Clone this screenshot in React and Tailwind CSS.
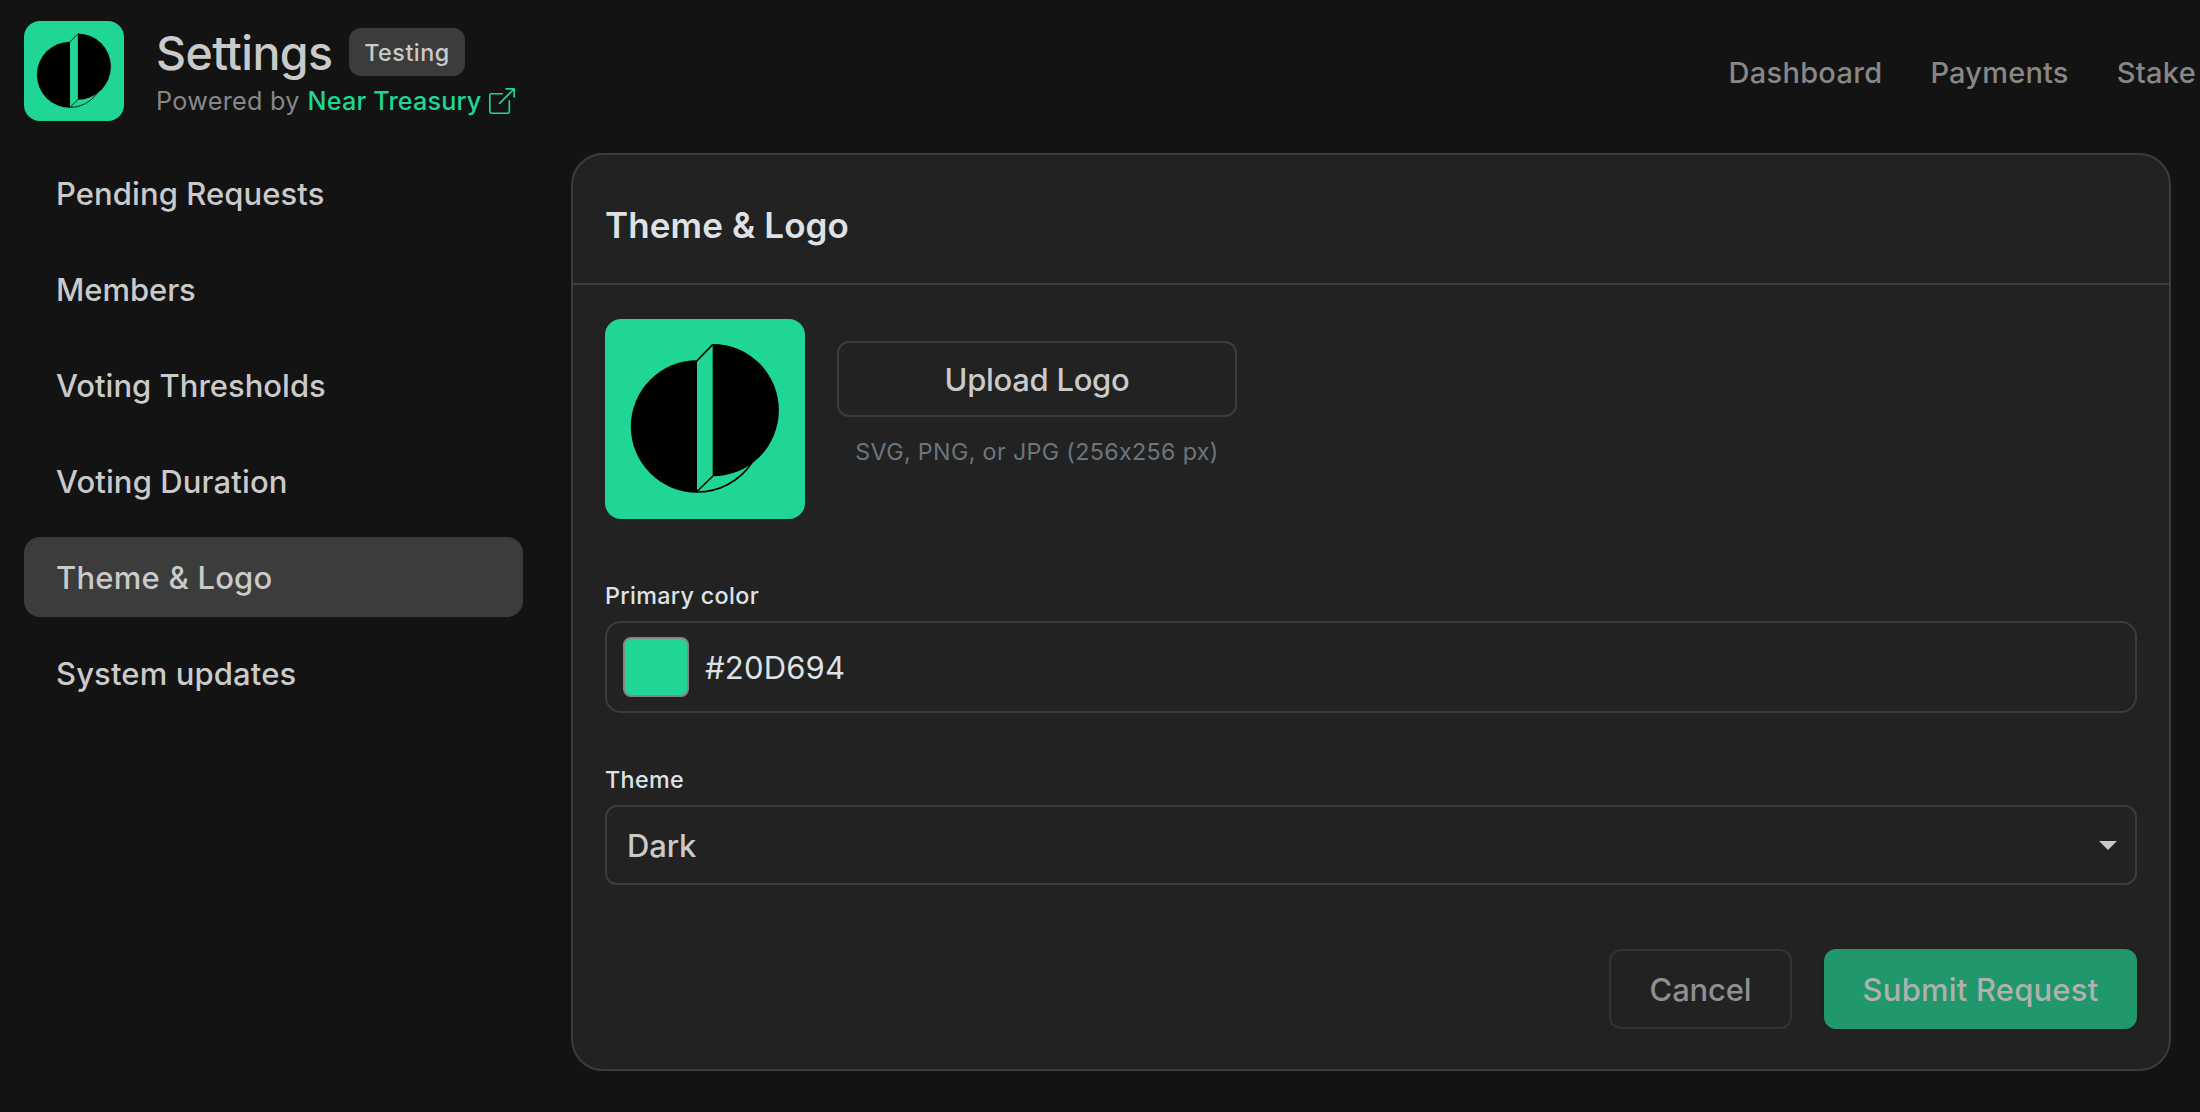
import React from "react";
import { BsBoxArrowUpRight } from "react-icons/bs";

const menu = [
  { label: "Pending Requests", tracking: "tracking-[0.08px]" },
  { label: "Members", tracking: "tracking-[-0.05px]" },
  { label: "Voting Thresholds", tracking: "tracking-normal" },
  { label: "Voting Duration", tracking: "tracking-[0.12px]" },
  { label: "Theme & Logo", tracking: "tracking-[0.22px]", active: true },
  { label: "System updates", tracking: "tracking-[0.13px]" },
];

function Logo({ className }) {
  return (
    <div className={`shrink-0 overflow-hidden rounded-2xl bg-[#20d694] ${className}`}>
      <svg viewBox="0 0 200 200" className="block h-full w-full">
        <path d="M92 41.3A66.2 66.2 0 0 0 92 173.7Z" fill="#000" />
        <path d="M107.7 25A66.15 66.15 0 0 1 107.7 157.3Z" fill="#000" />
        <g fill="none" stroke="#000" strokeWidth="1.6">
          <path d="M91.5 42.2L107.9 25.4" />
          <path d="M92 172.5L107.9 157" />
          <path d="M91 173A65.6 65.6 0 0 0 147 143.5" />
        </g>
      </svg>
    </div>
  );
}

function Header() {
  return (
    <header className="flex h-[153px] items-start justify-between pl-6 pr-1 pt-[21px]">
      <div className="flex gap-8">
        <Logo className="h-[100px] w-[100px]" />
        <div>
          <div className="flex h-[62px] items-center gap-4">
            <h1 className="w-[177px] whitespace-nowrap pt-0.5 text-[46.5px] font-medium leading-[60px] tracking-[-0.6px] text-[#cacaca]">
              Settings
            </h1>
            <span className="flex h-12 w-[116px] items-center justify-center rounded-xl bg-[#3c3c3c] pt-0.5 text-[23.3px] font-medium leading-none tracking-[0.53px] text-[#cacaca]">
              Testing
            </span>
          </div>
          <div className="flex h-[35px] items-center gap-2 text-[25.2px] leading-[35px]">
            <span className="w-[143.5px] whitespace-nowrap pt-0.5 tracking-[0.3px] text-[#878787]">Powered by</span>
            <a className="flex items-center gap-[7px] font-medium tracking-[0.17px] text-[#20d694]">
              <span className="pt-0.5">Near Treasury</span>
              <BsBoxArrowUpRight className="h-[26px] w-[26px]" />
            </a>
          </div>
        </div>
      </div>
      <nav className="flex gap-12 pt-8 text-[29px] font-medium leading-10 text-[#878787]">
        <a className="tracking-[0.3px]">Dashboard</a>
        <a className="tracking-[0.2px]">Payments</a>
        <a className="tracking-[0.3px]">Stake</a>
      </nav>
    </header>
  );
}

function Sidebar() {
  return (
    <aside className="flex w-[499px] shrink-0 flex-col gap-4">
      {menu.map((m) => (
        <a
          key={m.label}
          className={`flex h-20 items-center rounded-2xl pl-8 pt-0.5 text-[31px] font-medium text-[#cacaca] ${m.tracking} ${m.active ? "bg-[#3c3c3c]" : ""}`}
        >
          {m.label}
        </a>
      ))}
    </aside>
  );
}

function Label({ children }) {
  return (
    <div className="mb-[7px] h-9 pt-px text-[23.3px] font-medium leading-9 tracking-[0.35px] text-[#dee2e6] box-content">
      {children}
    </div>
  );
}

export default function App() {
  return (
    <div className="h-[1112px] w-[2200px] overflow-hidden bg-[#131313] font-['Inter',sans-serif]">
      <Header />
      <div className="flex items-start gap-12 pl-6">
        <Sidebar />
        <main className="w-[1600px] rounded-[32px] border-2 border-[#3c3c3c] bg-[#222222]">
          <div className="flex h-[130px] items-center border-b-2 border-[#3c3c3c] px-8 pt-3">
            <h2 className="text-[35px] font-semibold tracking-[0.12px] text-[#dee2e6]">Theme &amp; Logo</h2>
          </div>
          <div className="px-8 pb-10 pt-[34px]">
            <div className="flex gap-8">
              <Logo className="h-[200px] w-[200px]" />
              <div className="w-[400px] pt-[22px]">
                <button className="flex h-[76px] w-full items-center justify-center rounded-xl border-2 border-[#3c3c3c] pt-[3px] text-[31px] font-medium tracking-[-0.29px] text-[#cacaca]">
                  Upload Logo
                </button>
                <p className="mt-[17px] whitespace-nowrap text-center text-[23.3px] leading-9 tracking-[0.33px] text-[#6c757d]">
                  SVG, PNG, or JPG (256x256 px)
                </p>
              </div>
            </div>

            <div className="mt-[58px]">
              <Label>Primary color</Label>
              <div className="flex h-[92px] items-center gap-4 rounded-2xl border-2 border-[#3c3c3c] px-4">
                <span className="h-[60px] w-[66px] rounded-lg border-2 border-[#858585] bg-[#20d694]" />
                <span className="pt-0.5 text-[31px] tracking-[0.18px] text-[#dee2e6]">#20D694</span>
              </div>
            </div>

            <div className="mt-12">
              <Label>Theme</Label>
              <div className="flex h-20 items-center justify-between rounded-xl border-2 border-[#3c3c3c] pl-5 pr-[18px]">
                <span className="pt-[3px] text-[31px] font-medium tracking-[-0.15px] text-[#cacaca]">Dark</span>
                <svg viewBox="0 0 18 9" className="h-[9px] w-[18px]">
                  <path d="M0 0H18L9 9Z" fill="#cacaca" />
                </svg>
              </div>
            </div>

            <div className="mt-16 flex justify-end gap-8 text-[31px] font-medium">
              <button className="h-20 w-[183px] rounded-xl border-2 border-[#333333] pt-0.5 tracking-[-0.18px] text-[#8f8f8f]">
                Cancel
              </button>
              <button className="h-20 w-[313px] rounded-xl bg-[#21976c] pt-0.5 tracking-[0.19px] text-[#b0b0b0] shadow-sm">
                Submit Request
              </button>
            </div>
          </div>
        </main>
      </div>
    </div>
  );
}
